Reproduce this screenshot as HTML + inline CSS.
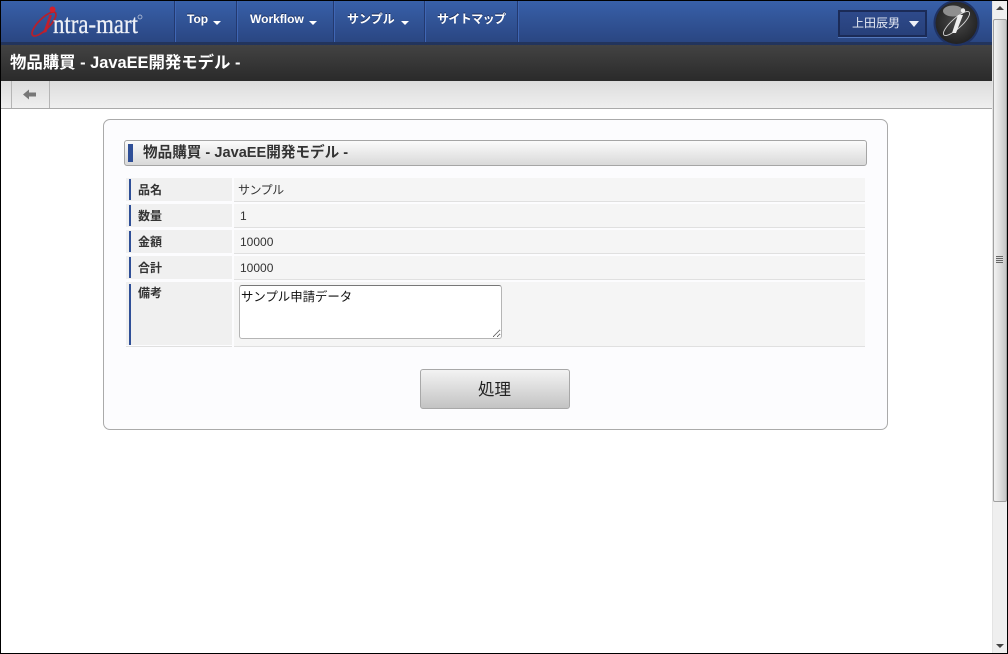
<!DOCTYPE html>
<html lang="ja">
<head>
<meta charset="utf-8">
<title>物品購買</title>
<style>
html,body{margin:0;padding:0;width:1008px;height:654px;overflow:hidden;background:#fff}
body{position:relative;font-family:"Liberation Sans","WenQuanYi Zen Hei","Noto Sans CJK JP",sans-serif;color:#333}
div,span,svg,textarea{position:absolute;box-sizing:border-box}
.t{white-space:nowrap;line-height:16px}
.sep{top:1px;width:2px;height:41px;background:linear-gradient(to right,#23396f 0 1px,#3f66b4 1px 2px)}
.nav{top:11px;font-size:12px;font-weight:bold;color:#fff;text-shadow:0 -1px 0 #1c2d5a}
.caret{top:21px;width:0;height:0;border-left:4px solid transparent;border-right:4px solid transparent;border-top:4px solid #fff}
.th{left:126px;width:106px;background:#f0f0f0}
.bar{left:129px;width:2px;background:#2f4f97}
.td{left:234px;width:631px;background:#f5f5f5;border-bottom:1px solid #e0e0e0}
.lbl{left:138px;font-size:12px;font-weight:bold;color:#333}
.val{left:240px;font-size:12px;color:#333}
</style>
</head>
<body>
<!-- header -->
<div style="left:1px;top:1px;width:991px;height:41px;background:linear-gradient(#3860a9,#2a4682)"></div>
<div style="left:1px;top:42px;width:991px;height:3px;background:#22345c"></div>
<div style="left:1px;top:45px;width:991px;height:36px;background:linear-gradient(#434343,#2a2a2a)"></div>
<div style="left:1px;top:81px;width:991px;height:27px;background:linear-gradient(#dcdcdc,#efefef)"></div>
<div style="left:1px;top:108px;width:991px;height:1px;background:#aaa"></div>

<!-- logo -->
<svg style="left:25px;top:2px" width="125" height="40" viewBox="0 0 125 40">
<ellipse cx="19" cy="22" rx="16" ry="5.500" transform="rotate(-45 19 22)" fill="none" stroke="#b5202c" stroke-width="1.800"/>
<circle cx="27.500" cy="7.500" r="3" fill="#d1202c"/>
<path d="M24.500 13 L27 13 L21.500 30 L18 31 Z" fill="#c21f2c"/>
<text x="28" y="31" font-family="Liberation Serif" font-size="27" fill="#eef1f7" stroke="#eef1f7" stroke-width=".25" textLength="85" lengthAdjust="spacingAndGlyphs">ntra-mart</text>
<circle cx="115" cy="15" r="2" fill="none" stroke="#c9d0e0" stroke-width=".7"/>
</svg>

<!-- nav -->
<div class="sep" style="left:174px"></div>
<div class="sep" style="left:236px"></div>
<div class="sep" style="left:333px"></div>
<div class="sep" style="left:424px"></div>
<div class="sep" style="left:517px"></div>
<div class="t nav" style="left:187px">Top</div><div class="caret" style="left:213px"></div>
<div class="t nav" style="left:250px">Workflow</div><div class="caret" style="left:309px"></div>
<div class="t nav" style="left:347px">サンプル</div><div class="caret" style="left:401px"></div>
<div class="t nav" style="left:437px;letter-spacing:-.6px">サイトマップ</div>

<!-- user box -->
<div style="left:838px;top:10px;width:89px;height:27px;background:linear-gradient(#2e4a8b,#27407a);border:2px solid #1b2b57;box-shadow:0 1px 0 #5478bd"></div>
<div class="t" style="left:852px;top:15px;font-size:12px;color:#e8ecf5">上田辰男</div>
<div style="left:909px;top:21px;width:0;height:0;border-left:5px solid transparent;border-right:5px solid transparent;border-top:6px solid #eef1f8"></div>

<!-- i badge -->
<svg style="left:932px;top:0" width="50" height="48" viewBox="0 0 50 48">
<defs><radialGradient id="g" cx=".5" cy=".45" r=".6"><stop offset="0" stop-color="#4a4a4a"/><stop offset="1" stop-color="#1e1e1e"/></radialGradient></defs>
<circle cx="24.500" cy="23" r="23" fill="#1f3263"/>
<circle cx="24.500" cy="23" r="21" fill="url(#g)"/>
<ellipse cx="21" cy="11" rx="10" ry="5.500" fill="#8f8f8f"/>
<ellipse cx="24.500" cy="23.500" rx="17" ry="5" transform="rotate(-42 24.500 23.500)" fill="none" stroke="#d8d8d8" stroke-width=".9"/>
<circle cx="31" cy="10.500" r="2.200" fill="#eee"/>
<path d="M26 15 L31 15 L24 33 L20 33 Z" fill="#eee"/>
</svg>

<!-- title -->
<div class="t" style="left:10px;top:55px;font-size:16.400px;font-weight:bold;color:#fff">物品購買 - JavaEE開発モデル -</div>

<!-- toolbar -->
<div style="left:11px;top:81px;width:39px;height:27px;border-left:1px solid #b5b5b5;border-right:1px solid #b5b5b5"></div>
<svg style="left:22px;top:88px" width="16" height="14" viewBox="0 0 16 14"><path d="M1 6.500 L7 1.500 V4.500 H14 V8.500 H7 V11.500 Z" fill="#777"/></svg>

<!-- card -->
<div style="left:103px;top:119px;width:785px;height:311px;background:#fcfcfe;border:1px solid #aaa;border-radius:7px"></div>
<div style="left:124px;top:140px;width:743px;height:26px;background:linear-gradient(#fbfbfb,#d9d9d9);border:1px solid #a5a5a5;border-radius:3px"></div>
<div style="left:128px;top:144px;width:5px;height:18px;background:#2f4f97"></div>
<div class="t" style="left:143px;top:145px;font-size:14.600px;font-weight:bold;color:#333">物品購買 - JavaEE開発モデル -</div>

<!-- rows -->
<div class="th" style="top:178px;height:23px"></div><div class="bar" style="top:179px;height:21px"></div><div class="td" style="top:178px;height:24px"></div>
<div class="t lbl" style="top:182px">品名</div><div class="t val" style="top:182px;left:238px;letter-spacing:-.5px">サンプル</div>

<div class="th" style="top:204px;height:23px"></div><div class="bar" style="top:205px;height:21px"></div><div class="td" style="top:204px;height:24px"></div>
<div class="t lbl" style="top:208px">数量</div><div class="t val" style="top:208px">1</div>

<div class="th" style="top:230px;height:23px"></div><div class="bar" style="top:231px;height:21px"></div><div class="td" style="top:230px;height:24px"></div>
<div class="t lbl" style="top:234px">金額</div><div class="t val" style="top:234px">10000</div>

<div class="th" style="top:256px;height:23px"></div><div class="bar" style="top:257px;height:21px"></div><div class="td" style="top:256px;height:24px"></div>
<div class="t lbl" style="top:260px">合計</div><div class="t val" style="top:260px">10000</div>

<div class="th" style="top:282px;height:63px"></div><div class="bar" style="top:284px;height:61px"></div><div class="td" style="top:282px;height:65px"></div>
<div style="left:126px;top:346px;width:106px;height:1px;background:#e0e0e0"></div>
<div class="t lbl" style="top:285px">備考</div>

<textarea style="left:239px;top:285px;width:263px;height:54px;margin:0;padding:3px 1px 1px;font:12.400px/16px 'Liberation Sans','WenQuanYi Zen Hei','Noto Sans CJK JP',sans-serif;color:#111;background:#fff;border:1px solid #b5b5b5;border-top-color:#777;border-radius:3px">サンプル申請データ</textarea>

<!-- button -->
<div style="left:420px;top:369px;width:150px;height:40px;background:linear-gradient(#f3f3f3,#c3c3c3);border:1px solid #a8a8a8;border-radius:3px"></div>
<div class="t" style="left:478px;top:382px;font-size:16.500px;color:#222">処理</div>

<!-- scrollbar -->
<div style="left:992px;top:1px;width:15px;height:652px;background:#efefef;border-left:1px solid #e4e4e4"></div>
<div style="left:993px;top:19px;width:14px;height:483px;background:linear-gradient(to right,#f2f2f2,#dcdcdc 55%,#c6c6c6);border:1px solid #a0a0a0;border-radius:2px"></div>
<div style="left:996px;top:6px;width:0;height:0;border-left:4px solid transparent;border-right:4px solid transparent;border-bottom:4px solid #444"></div>
<div style="left:996px;top:644px;width:0;height:0;border-left:4px solid transparent;border-right:4px solid transparent;border-top:4px solid #444"></div>
<div style="left:996px;top:256px;width:7px;height:7px;background:repeating-linear-gradient(#666 0 1px,#ddd 1px 2px)"></div>

<!-- outer frame -->
<div style="left:0;top:0;width:1008px;height:654px;border:1px solid #000;pointer-events:none"></div>
</body>
</html>
